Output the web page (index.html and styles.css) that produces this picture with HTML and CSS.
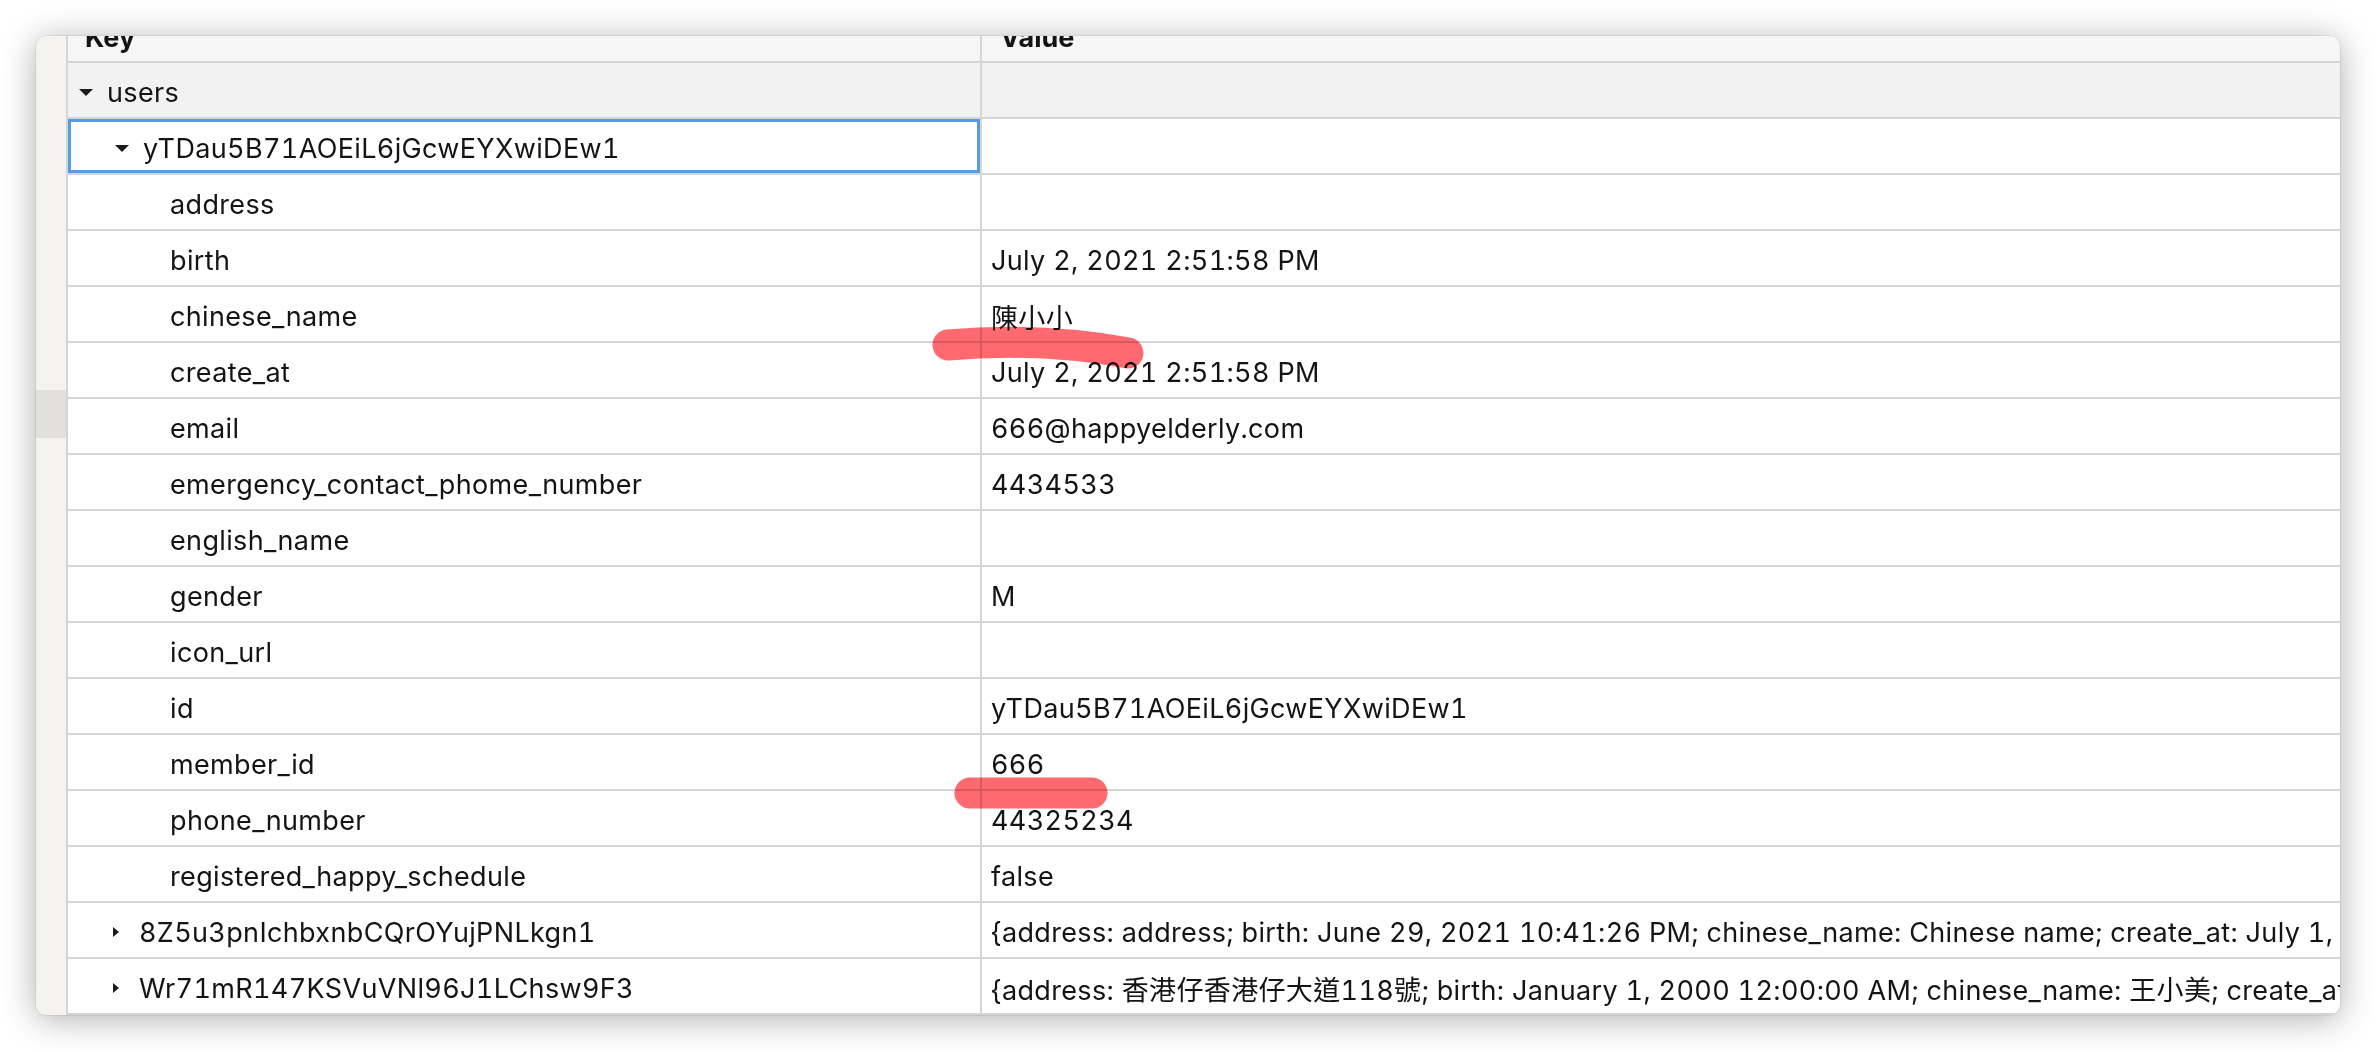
FILE: index.html
```html
<!DOCTYPE html>
<html lang="en">
<head>
<meta charset="utf-8">
<title>users</title>
<link rel="stylesheet" href="styles.css">
</head>
<body>
<div class="stage">
  <div class="window">
    <div class="sidebar"><div class="sidebar-mark"></div></div>
    <div class="table">
      <div class="row header">
        <div class="cell key"><span class="htext">Key</span></div>
        <div class="cell val"><span class="htext">Value</span></div>
      </div>
      <div class="row group">
        <div class="cell key lvl0"><span class="tri-down"></span><span>users</span></div>
        <div class="cell val"></div>
      </div>
      <div class="row">
        <div class="cell key lvl1 selected"><span class="tri-down"></span><span>yTDau5B71AOEiL6jGcwEYXwiDEw1</span></div>
        <div class="cell val"></div>
      </div>
      <div class="row"><div class="cell key leaf">address</div><div class="cell val"></div></div>
      <div class="row"><div class="cell key leaf">birth</div><div class="cell val">July 2, 2021 2:51:58 PM</div></div>
      <div class="row"><div class="cell key leaf">chinese_name</div><div class="cell val">陳小小</div></div>
      <div class="row"><div class="cell key leaf">create_at</div><div class="cell val">July 2, 2021 2:51:58 PM</div></div>
      <div class="row"><div class="cell key leaf">email</div><div class="cell val">666@happyelderly.com</div></div>
      <div class="row"><div class="cell key leaf">emergency_contact_phome_number</div><div class="cell val">4434533</div></div>
      <div class="row"><div class="cell key leaf">english_name</div><div class="cell val"></div></div>
      <div class="row"><div class="cell key leaf">gender</div><div class="cell val">M</div></div>
      <div class="row"><div class="cell key leaf">icon_url</div><div class="cell val"></div></div>
      <div class="row"><div class="cell key leaf">id</div><div class="cell val">yTDau5B71AOEiL6jGcwEYXwiDEw1</div></div>
      <div class="row"><div class="cell key leaf">member_id</div><div class="cell val">666</div></div>
      <div class="row"><div class="cell key leaf">phone_number</div><div class="cell val">44325234</div></div>
      <div class="row"><div class="cell key leaf">registered_happy_schedule</div><div class="cell val">false</div></div>
      <div class="row">
        <div class="cell key lvl1c"><span class="tri-right"></span><span>8Z5u3pnIchbxnbCQrOYujPNLkgn1</span></div>
        <div class="cell val">{address: address; birth: June 29, 2021 10:41:26 PM; chinese_name: Chinese name; create_at: July 1, 2021 3:12:44 PM; email: test@happyelderly.com; emergency_contact_phome_number: 12345678}</div>
      </div>
      <div class="row">
        <div class="cell key lvl1c"><span class="tri-right"></span><span>Wr71mR147KSVuVNl96J1LChsw9F3</span></div>
        <div class="cell val">{address: 香港仔香港仔大道118號; birth: January 1, 2000 12:00:00 AM; chinese_name: 王小美; create_at: July 1, 2021 11:20:05 AM; email: wong@happyelderly.com}</div>
      </div>
    </div>
  </div>
  <svg class="marks" width="2376" height="1052" viewBox="0 0 2376 1052" aria-hidden="true">
    <path d="M948 345 Q 1040 337 1128 353" />
    <path d="M970 793 L 1092 793" />
  </svg>
</div>
</body>
</html>
```
FILE: styles.css
```css
html, body {
  margin: 0;
  padding: 0;
  background: #ffffff;
}
body {
  font-family: "Inter", "Noto Sans CJK TC", sans-serif;
  color: #141414;
}
.stage {
  position: relative;
  width: 2376px;
  height: 1052px;
  padding: 36px 0 0 36px;
  box-sizing: border-box;
  overflow: hidden;
}
.window {
  width: 2304px;
  height: 979px;
  display: flex;
  border-radius: 11px;
  overflow: hidden;
  background: #ffffff;
  box-shadow: 0 0 0 1px rgba(0,0,0,0.06), 0 4px 34px rgba(0,0,0,0.32);
}
.sidebar {
  width: 30px;
  flex: none;
  background: #f4f3ef;
  border-right: 2px solid #d5d5d5;
  padding-top: 354px;
  box-sizing: content-box;
}
.sidebar-mark {
  height: 48px;
  background: #e1e0dc;
}
.table {
  flex: 1;
  min-width: 0;
  overflow: hidden;
}
.row {
  display: grid;
  grid-template-columns: 914px 1fr;
  height: 54px;
  border-bottom: 2px solid #d5d5d5;
  font-size: 27px;
  letter-spacing: 0.35px;
  font-variant-numeric: tabular-nums;
}
.cell {
  display: flex;
  align-items: center;
  white-space: nowrap;
  overflow: hidden;
  min-width: 0;
  padding-top: 4px;
  box-sizing: border-box;
}
.key {
  border-right: 2px solid #d6d6d6;
}
.val {
  padding-left: 9px;
}
.header {
  height: 25px;
  background: #f6f6f6;
  overflow: hidden;
  letter-spacing: 0;
}
.header .cell {
  align-items: flex-start;
  padding-top: 0;
}
.header .key { padding-left: 17px; }
.header .val { padding-left: 18px; }
.htext {
  font-weight: 700;
  line-height: 27px;
  margin-top: -12px;
}
.group {
  background: #f2f2f2;
}
.lvl0 { padding-left: 11px; }
.lvl1 { padding-left: 47px; }
.lvl1c { padding-left: 45px; }
.leaf { padding-left: 102px; }
.selected {
  box-shadow: inset 0 0 0 3px #569ce3;
}
.tri-down {
  width: 0;
  height: 0;
  border-left: 7px solid transparent;
  border-right: 7px solid transparent;
  border-top: 7px solid #1a1a1a;
  margin-right: 14px;
  flex: none;
}
.tri-right {
  width: 0;
  height: 0;
  border-top: 5px solid transparent;
  border-bottom: 5px solid transparent;
  border-left: 6px solid #1a1a1a;
  margin-right: 20px;
  flex: none;
}
.marks {
  position: absolute;
  left: 0;
  top: 0;
  pointer-events: none;
  mix-blend-mode: multiply;
}
.marks path {
  fill: none;
  stroke: #ff6a71;
  stroke-width: 31;
  stroke-linecap: round;
}
```
